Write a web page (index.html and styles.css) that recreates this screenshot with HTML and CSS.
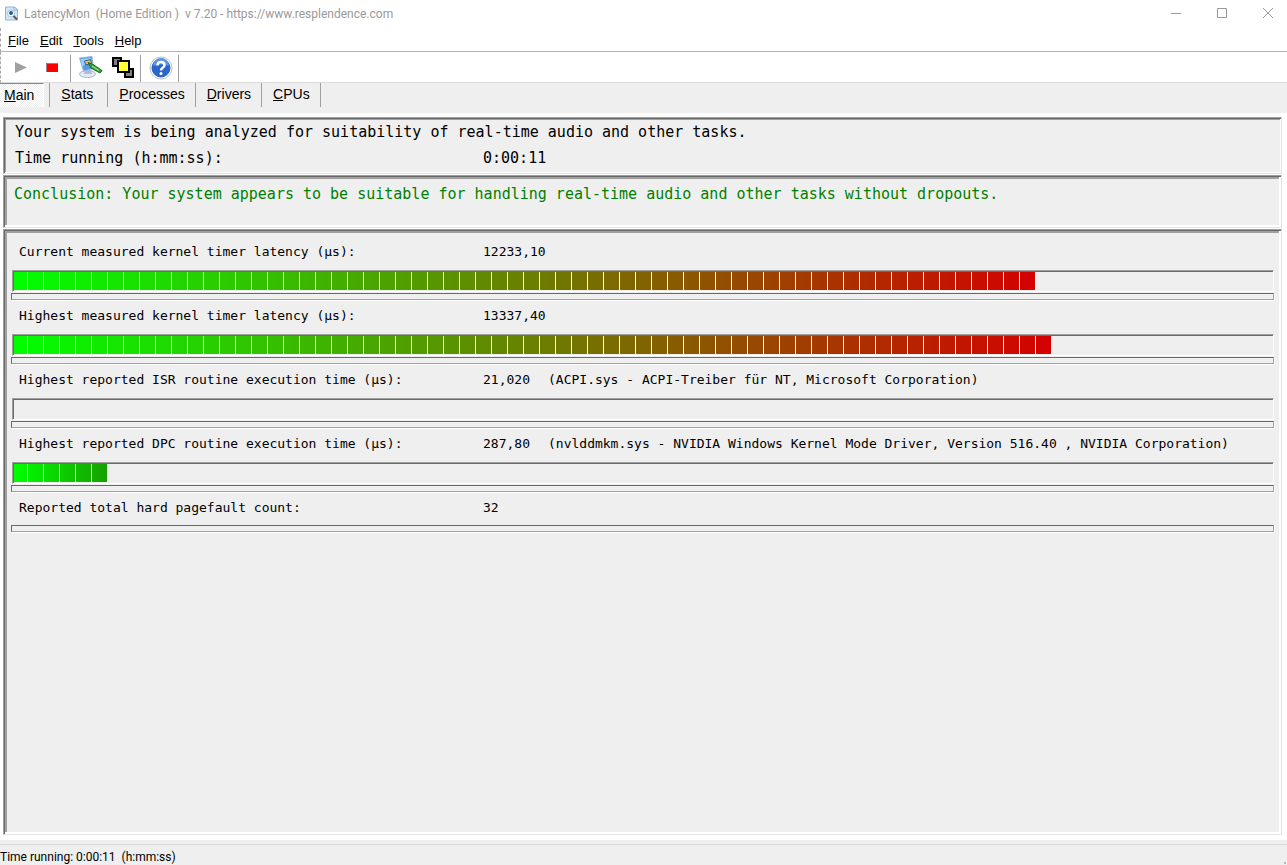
FILE: index.html
```html
<!DOCTYPE html>
<html lang="en">

<head>
    <meta charset="UTF-8">
    <meta name="viewport" content="width=device-width, initial-scale=1.0">
    <title>LatencyMon</title>
    <link rel="stylesheet" href="styles.css">
</head>

<body>
    <div class="window">
        <header class="titlebar">
            <svg class="app-icon" width="16" height="16" viewBox="0 0 16 16">
                <path d="M1.500 1h9l3 3v10h-12z" fill="#cfe6f8" stroke="#8db8dc" />
                <path d="M10 1v3h4z" fill="#fff" stroke="#8db0d0" />
                <circle cx="7" cy="7.500" r="3.500" fill="#f4faff" stroke="#b4c4d0" />
                <circle cx="7" cy="7" r="2" fill="#24608f" />
                <path d="M9.500 10l3.500 3.500" stroke="#6a4a5a" stroke-width="2" />
            </svg>
            <h1 class="title">LatencyMon&nbsp; (Home Edition )&nbsp; v 7.20 - https://www.resplendence.com</h1>
            <div class="window-buttons">
                <button class="winbtn" aria-label="Minimize">
                    <svg width="12" height="12" viewBox="0 0 12 12"><path d="M1 5.500h10" /></svg>
                </button>
                <button class="winbtn" aria-label="Maximize">
                    <svg width="12" height="12" viewBox="0 0 12 12"><path d="M1.500 .5h9v9h-9z" /></svg>
                </button>
                <button class="winbtn" aria-label="Close">
                    <svg width="12" height="12" viewBox="0 0 12 12"><path d="M1 0l10 10M11 0L1 10" /></svg>
                </button>
            </div>
        </header>

        <nav class="menubar">
            <button class="menu"><u>F</u>ile</button>
            <button class="menu"><u>E</u>dit</button>
            <button class="menu"><u>T</u>ools</button>
            <button class="menu"><u>H</u>elp</button>
        </nav>

        <div class="toolbar">
            <div class="group">
                <button class="tool" aria-label="Start">
                    <svg width="24" height="24" viewBox="0 0 24 24"><path d="M6 6l12 5.500-12 5.500z" fill="#a0a0a0" /></svg>
                </button>
                <button class="tool" aria-label="Stop">
                    <svg width="24" height="24" viewBox="0 0 24 24"><path d="M5 7h12v9H5z" fill="#f00" /><path d="M5.500 16V7.500H17" fill="none" stroke="#a08080" /></svg>
                </button>
            </div>
            <div class="group">
                <button class="tool" aria-label="Options">
                    <svg width="24" height="24" viewBox="0 0 24 24">
                        <ellipse cx="8.500" cy="18" rx="8" ry="3.500" fill="#e6e8f4" stroke="#b0b4cc" />
                        <path d="M6 14h6l1 4H5z" fill="#b4b9d6" />
                        <path d="M.5 2l12.500-1.500 1.500 12-10 2.500z" fill="#4e9be8" stroke="#9bb4d6" />
                        <path d="M2 3l10-1 1 5-10 3z" fill="#9ad2ff" />
                        <path d="M5.500 5l6-1.500 1 4-6 1.500z" fill="#ffb52e" stroke="#2862a5" />
                        <path d="M9 6.500l5 2 9 6-2 2.500-9-5z" fill="#35a936" stroke="#176b22" />
                        <path d="M13 10l7 4.500" stroke="#a9ed9a" />
                    </svg>
                </button>
                <button class="tool" aria-label="Processes in view">
                    <svg width="24" height="24" viewBox="0 0 24 24">
                        <path d="M2 2h8v8H2zM14 13h8v8h-8z" fill="#808080" stroke="#000" stroke-width="2" />
                        <path d="M7 5h11v11H7z" fill="#ff3" stroke="#000" stroke-width="2" />
                        <path d="M8 6.500h9M8 8.500h9M8 10.500h9M8 12.500h9M8 14.500h9" stroke="#fffff0" stroke-dasharray="1 1" />
                    </svg>
                </button>
            </div>
            <div class="group">
                <button class="tool" aria-label="Help">
                    <svg width="24" height="24" viewBox="0 0 24 24">
                        <circle cx="12" cy="12" r="11" fill="#fff" stroke="#b6bfca" />
                        <circle cx="12" cy="12" r="9" fill="#2866cd" stroke="#2a5cb8" />
                        <path d="M4 10a8 8 0 0 1 16 0q-8-3-16 0" fill="#5b92e5" />
                        <path d="M8.500 9.500q0-3.500 3.500-3.500t3.500 3q0 2-2 3-1.500 1-1.500 2.500" fill="none" stroke="#fff" stroke-width="2.500" />
                        <circle cx="12" cy="17.500" r="1.500" fill="#fff" />
                    </svg>
                </button>
            </div>
        </div>

        <nav class="tabs">
            <button class="tab active"><u>M</u>ain</button>
            <button class="tab"><u>S</u>tats</button>
            <button class="tab"><u>P</u>rocesses</button>
            <button class="tab"><u>D</u>rivers</button>
            <button class="tab"><u>C</u>PUs</button>
        </nav>

        <main class="content">
            <section class="panel summary">
                <p>Your system is being analyzed for suitability of real-time audio and other tasks.</p>
                <p class="pair"><span>Time running (h:mm:ss):</span><span>0:00:11</span></p>
            </section>

            <section class="panel conclusion">
                <p>Conclusion: Your system appears to be suitable for handling real-time audio and other tasks without dropouts.</p>
            </section>

            <section class="panel readings">
                <div class="reading">
                    <label class="line" for="current"><span>Current measured kernel timer latency (µs):</span><span>12233,10</span></label>
                    <progress class="bar" id="current" value="812" max="1000"></progress>
                    <div class="divider"></div>
                </div>
                <div class="reading">
                    <label class="line" for="highest"><span>Highest measured kernel timer latency (µs):</span><span>13337,40</span></label>
                    <progress class="bar" id="highest" value="824" max="1000"></progress>
                    <div class="divider"></div>
                </div>
                <div class="reading">
                    <label class="line" for="isr"><span>Highest reported ISR routine execution time (µs):</span><span>21,020</span><span>(ACPI.sys - ACPI-Treiber für NT, Microsoft Corporation)</span></label>
                    <progress class="bar" id="isr" value="0" max="1000"></progress>
                    <div class="divider"></div>
                </div>
                <div class="reading">
                    <label class="line" for="dpc"><span>Highest reported DPC routine execution time (µs):</span><span>287,80</span><span>(nvlddmkm.sys - NVIDIA Windows Kernel Mode Driver, Version 516.40 , NVIDIA Corporation)</span></label>
                    <progress class="bar low" id="dpc" value="74" max="1000"></progress>
                    <div class="divider"></div>
                </div>
                <div class="reading">
                    <p class="line count"><span>Reported total hard pagefault count:</span><span>32</span></p>
                    <div class="divider"></div>
                </div>
            </section>
        </main>

        <footer class="statusbar">
            <span>Time running: 0:00:11&nbsp; (h:mm:ss)</span>
            <span class="grip"></span>
        </footer>
    </div>
</body>

</html>
```
FILE: styles.css
```css
* {
    box-sizing: border-box;
    margin: 0;
    padding: 0;
}

body {
    background-color: #fff;
    color: #000;
}

button {
    border: 0;
    background: none;
    color: inherit;
    font: inherit;
}

.window {
    display: flex;
    flex-direction: column;
    min-height: 100vh;
}

/* title bar */
.titlebar {
    display: flex;
    align-items: center;
    height: 28px;
    padding-left: 4px;
    color: #999;
}

.title {
    flex: 1;
    padding-left: 4px;
    font: 12px/16px Roboto, "Open Sans", sans-serif;
}

.window-buttons {
    display: flex;
    margin-right: -4px;
}

.winbtn {
    display: flex;
    justify-content: center;
    align-items: center;
    width: 46px;
    height: 28px;
}

.winbtn path {
    fill: none;
    stroke: #999;
}

/* menu and tools */
.menubar {
    display: flex;
    height: 24px;
    padding: 1px 0 0 2px;
    border-bottom: 1px solid #b4b4b9;
    border-left: 1px dashed #aaa;
    font: 13px/24px "Liberation Sans", Arial, sans-serif;
}

.menu {
    padding: 0 6px 0 5px;
}

.toolbar {
    display: flex;
    height: 31px;
    padding-top: 3px;
    border-bottom: 1px solid #dcdcdc;
    border-left: 1px dashed #aaa;
}

.group {
    display: flex;
    gap: 8px;
    padding: 1px 5px 0 8px;
    border-right: 1px solid #a0a0a0;
}

.tool {
    width: 24px;
    height: 24px;
}

.tool svg {
    display: block;
}

/* tabs */
.tabs {
    display: flex;
    height: 30px;
    padding-bottom: 6px;
    background-color: #efefef;
    font: 14px/20px "Liberation Sans", Arial, sans-serif;
}

.tab {
    min-width: 58px;
    padding: 0 10px 2px 11px;
    border-right: 1px solid #a0a0a0;
    text-align: left;
}

.tab.active {
    min-width: 44px;
    margin-right: 5px;
    padding: 0 9px 1px 4px;
    border-top: 1px solid #888;
    border-right-color: #fff;
    background: repeating-conic-gradient(#fff 0 25%, #efefef 0 50%) 0 0 / 2px 2px;
}

.tab.active + .tab {
    min-width: 59px;
    border-left: 1px solid #a0a0a0;
}

/* panels */
.content {
    display: flex;
    flex: 1;
    flex-direction: column;
    gap: 1px;
    padding: 4px 5px 5px 3px;
}

.panel {
    border: 1px solid;
    border-color: #a0a0a0 #e3e3e3 #e3e3e3 #a0a0a0;
    background-color: #efefef;
    box-shadow: inset 1px 1px #696969, inset -2px -2px #fff, inset 3px 3px #a0a0a0;
    font: 15px/26px "DejaVu Sans Mono", monospace;
}

.summary {
    height: 57px;
    padding: 1px 11px;
    box-shadow: inset 1px 1px #696969, inset -1px -1px #fff, inset 2px 2px #a0a0a0;
}

.pair {
    display: grid;
    grid-template-columns: 468px 1fr;
}

.conclusion {
    height: 53px;
    padding: 5px 10px;
    color: #008000;
}

.readings {
    flex: 1;
    padding: 4px 7px;
}

.line {
    display: grid;
    grid-template-columns: 464px 65px 1fr;
    height: 36px;
    padding-left: 8px;
    font-size: 13px;
    line-height: 36px;
    white-space: nowrap;
}

.line.count {
    height: 34px;
}

.bar {
    display: block;
    width: calc(100% - 1px);
    height: 22px;
    margin-left: 1px;
    padding: 1px 0 1px 1px;
    border: 1px solid;
    border-color: #a0a0a0 #fff #fff #a0a0a0;
    background-color: #efefef;
    box-shadow: inset 1px 1px #696969;
    appearance: none;
    -webkit-appearance: none;
}

.bar::-webkit-progress-bar {
    background-color: #efefef;
}

.bar::-webkit-progress-value {
    background: repeating-linear-gradient(90deg, #0000 0 13px, #fff 13px 14px, #0000 14px 16px), linear-gradient(90deg, #0f0, #d40000);
}

.bar.low::-webkit-progress-value {
    background: repeating-linear-gradient(90deg, #0000 0 13px, #fff 13px 14px, #0000 14px 16px), linear-gradient(90deg, #0f0, #16a000);
}

.divider {
    height: 7px;
    margin: 1px 0 -2px;
    border: 1px solid;
    border-color: #696969 #a0a0a0 #a0a0a0 #696969;
    box-shadow: 1px 1px #fff;
}

/* status bar */
.statusbar {
    display: flex;
    justify-content: space-between;
    align-items: flex-end;
    height: 25px;
    padding-right: 1px;
    border-top: 4px solid #efefef;
    background-color: #efefef;
    box-shadow: inset 0 1px #d7d7d7;
    font: 12px/15px Roboto, "Open Sans", sans-serif;
}

.grip {
    width: 2px;
    height: 2px;
    margin-bottom: 1px;
    background-color: #bbb;
}
```
